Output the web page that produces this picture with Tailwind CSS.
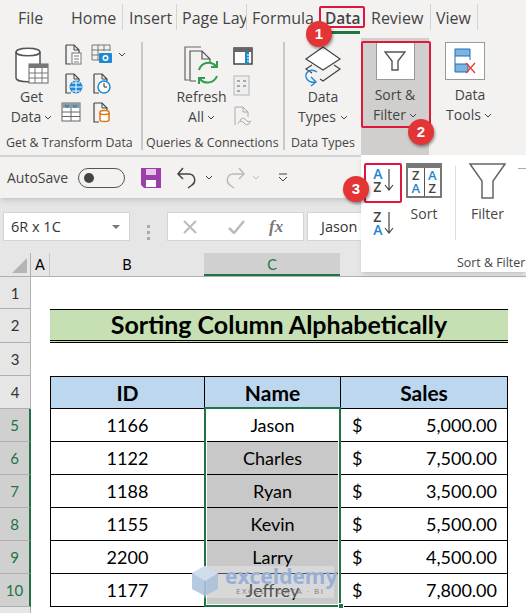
<!DOCTYPE html>
<html lang="en">
<head>
    <meta charset="UTF-8">
    <title>Sorting Column Alphabetically</title>
    <script src="https://cdn.jsdelivr.net/npm/@tailwindcss/browser@4"></script>
</head>
<body class="bg-white">
<div class="relative w-[526px] h-[613px] overflow-hidden font-['Open_Sans',sans-serif] text-[#444]">

    <!-- Tabs -->
    <div class="flex h-[30px] bg-[#f3f2f1] text-[16px] text-[#444]">
        <div class="w-[71px] pl-[18px] leading-[36px]">File</div>
        <div class="w-[52px] h-[26px] mt-[4px] leading-[28px] border-r border-[#d4d4d4]">Home</div>
        <div class="w-[54px] h-[26px] mt-[4px] leading-[28px] pl-[6px] border-r border-[#d4d4d4]">Insert</div>
        <div class="w-[70px] h-[26px] mt-[4px] leading-[28px] pl-[5px] border-r border-[#d4d4d4] overflow-hidden whitespace-nowrap">Page Lay</div>
        <div class="w-[72px] h-[26px] mt-[4px] leading-[28px] pl-[5px] overflow-hidden whitespace-nowrap">Formula</div>
        <div class="w-[52px] font-semibold pl-[6px] h-[26px] mt-[4px] leading-[28px] text-[15.500px]">Data</div>
        <div class="w-[60px] h-[26px] mt-[4px] leading-[28px] border-r border-[#d4d4d4]">Review</div>
        <div class="w-[47px] h-[26px] mt-[4px] leading-[28px] pl-[5px] border-r border-[#d4d4d4]">View</div>
    </div>

    <!-- Ribbon -->
    <div class="flex h-[127px] bg-[#f3f2f1] border-b-2 border-[#d4d4d4] text-[14px] leading-[20px]">
        <!-- Get & Transform Data -->
        <div class="w-[143px] h-[108px] mt-[12px] border-r-2 border-[#c8c8c8] flex flex-col">
            <div class="flex h-[93px]">
                <div class="w-[63px] pt-[4px] flex flex-col items-center">
                    <svg class="w-[36px] h-[41px]" viewBox="0 0 36 41" fill="none">
                        <path d="M2 6c0-5 24-5 24 0v26c0 5-24 5-24 0z" stroke="#555" stroke-width="1.5" fill="#fff"/>
                        <path d="M2 6c0 5 24 5 24 0" stroke="#555" stroke-width="1.5"/>
                        <rect x="15" y="18" width="19" height="19" fill="#fff" stroke="#666"/>
                        <path d="M15 18h19v4H15z" fill="#777"/>
                        <path d="M15 27h19M15 32h19M21 22v15M28 22v15" stroke="#777"/>
                    </svg>
                    <div>Get</div>
                    <div class="flex items-center gap-[3px]">Data <svg class="w-[8px] h-[5px]" viewBox="0 0 8 5" fill="none"><path d="M1 1l3 3 3-3" stroke="#444"/></svg></div>
                </div>
                <div class="grid grid-cols-[28px_36px] grid-rows-[29px_29px_29px] pt-[2px]">
                    <svg class="w-[20px] h-[21px]" viewBox="0 0 20 21" fill="none"><path d="M3 1h8l5 5v3M3 1v19h5" stroke="#444" stroke-width="1.2"/><path d="M11 1v5h5" stroke="#444"/><rect x="9" y="9" width="9" height="11" fill="#fff" stroke="#777"/><path d="M11 12h5M11 15h5M11 18h5" stroke="#777"/></svg>
                    <div class="flex items-center gap-[5px] h-[20px]">
                        <svg class="w-[22px] h-[20px]" viewBox="0 0 22 20" fill="none"><path d="M1 1h18v6M1 1v15h8M1 6h18M1 11h8M7 1v15M13 1v6" stroke="#777"/><rect x="8" y="9" width="13" height="10" rx="1" fill="#1e88d2"/><circle cx="14.500" cy="14" r="3" fill="#fff"/><circle cx="14.500" cy="14" r="1.500" fill="#1e88d2"/></svg>
                        <svg class="w-[8px] h-[5px]" viewBox="0 0 8 5" fill="none"><path d="M1 1l3 3 3-3" stroke="#444"/></svg>
                    </div>
                    <svg class="w-[20px] h-[21px]" viewBox="0 0 20 21" fill="none"><path d="M3 1h8l5 5v2M3 1v19h5" stroke="#444" stroke-width="1.2"/><path d="M11 1v5h5" stroke="#444"/><circle cx="13" cy="14" r="6.500" fill="#1e88d2"/><path d="M7 14h12M13 8v12M9 10h8M9 18h8" stroke="#fff"/></svg>
                    <svg class="w-[20px] h-[21px]" viewBox="0 0 20 21" fill="none"><path d="M3 1h8l5 5v2M3 1v19h5" stroke="#444" stroke-width="1.2"/><path d="M11 1v5h5" stroke="#444"/><circle cx="13" cy="14" r="6" fill="#fff" stroke="#1e88d2" stroke-width="1.500"/><path d="M13 10v4h3" stroke="#333"/></svg>
                    <svg class="w-[20px] h-[21px] -ml-[2px]" viewBox="0 0 20 21" fill="none"><rect x="1" y="1" width="18" height="18" fill="#fff" stroke="#666"/><path d="M1 1h18v5H1z" fill="#999"/><path d="M4 3l2 2 2-2M12 3l2 2 2-2" stroke="#1e88d2" stroke-width="1.500"/><path d="M1 10h18M1 14.500h18M10 6v13" stroke="#666"/></svg>
                    <svg class="w-[20px] h-[21px]" viewBox="0 0 20 21" fill="none"><path d="M3 1h8l5 5v2M3 1v19h5" stroke="#444" stroke-width="1.2"/><path d="M11 1v5h5" stroke="#444"/><path d="M9 10c0-2 9-2 9 0v8c0 2-9 2-9 0z" fill="#fff" stroke="#e3740f" stroke-width="1.500"/><path d="M9 11c0 2 9 2 9 0" stroke="#e3740f" stroke-width="1.500"/></svg>
                </div>
            </div>
            <div class="text-[12.400px] leading-[15px] pl-[6px] whitespace-nowrap">Get &amp; Transform Data</div>
        </div>

        <!-- Queries & Connections -->
        <div class="w-[142px] h-[108px] mt-[12px] border-r-2 border-[#c8c8c8] flex flex-col">
            <div class="flex h-[93px]">
                <div class="w-[87px] pl-[30px] pt-[4px] flex flex-col items-center">
                    <svg class="w-[36px] h-[41px] shrink-0" viewBox="0 0 36 41" fill="none">
                        <path d="M5 34H1V1h16" stroke="#666" stroke-width="1.2"/>
                        <path d="M6 35V5h12l8 8v4M6 35h6M18 5v8h8" stroke="#555" stroke-width="1.2"/>
                        <path d="M15 24a10 10 0 0 1 17-4M33 30a10 10 0 0 1-17 3" stroke="#2f9e4f" stroke-width="2"/>
                        <path d="M33 15v6h-6M15 38v-6h6" stroke="#2f9e4f" stroke-width="2"/>
                    </svg>
                    <div class="w-[60px] text-center">Refresh</div>
                    <div class="flex items-center gap-[3px]">All <svg class="w-[8px] h-[5px]" viewBox="0 0 8 5" fill="none"><path d="M1 1l3 3 3-3" stroke="#444"/></svg></div>
                </div>
                <div class="flex flex-col gap-[9px] pl-[3px] pt-[5px]">
                    <svg class="w-[20px] h-[19px]" viewBox="0 0 20 19" fill="none"><rect x="1" y="1" width="18" height="16" fill="#fff" stroke="#444" stroke-width="1.500"/><path d="M1 1h18v4H1z" fill="#666"/><path d="M14 5v12" stroke="#1e88d2" stroke-width="4"/><path d="M14 8h2M14 11h2M14 14h2" stroke="#fff"/></svg>
                    <svg class="w-[17px] h-[21px]" viewBox="0 0 17 21" fill="none"><rect x="1" y="1" width="15" height="19" fill="#eee" stroke="#b5b5b5"/><path d="M4 6h3M10 6h3M4 11h3M10 11h3M4 16h3" stroke="#aaa" stroke-width="2"/></svg>
                    <svg class="w-[19px] h-[21px] mt-[1px]" viewBox="0 0 19 21" fill="none"><path d="M2 19V1h8l5 5v5M10 1v5h5" stroke="#aaa"/><path d="M7 15a3 3 0 0 1 5-2l2 2a3 3 0 0 0 4 0M5 18a3 3 0 0 1 5-2l2 2a3 3 0 0 0 5-2" stroke="#aaa"/></svg>
                </div>
            </div>
            <div class="text-[12.400px] leading-[15px] pl-[3px] whitespace-nowrap overflow-hidden">Queries &amp; Connections</div>
        </div>

        <!-- Data Types -->
        <div class="w-[76px] h-[108px] mt-[12px] flex flex-col">
            <div class="h-[93px] pt-[4px] flex flex-col items-center">
                <svg class="w-[38px] h-[41px] shrink-0" viewBox="0 0 38 41" fill="none">
                    <path d="M19 1l17 12-17 11L2 13z" fill="#fff" stroke="#444" stroke-width="1.200"/>
                    <path d="M8 19l-6 4 6 4M30 19l6 4-17 12-3-2" stroke="#444" stroke-width="1.200"/>
                    <path d="M13 26c-6-4-12 0-11 5 1 4 5 6 9 5" stroke="#1e88d2" stroke-width="1.400"/>
                    <path d="M7 31l5 5-5 4" stroke="#1e88d2" stroke-width="1.400"/>
                </svg>
                <div>Data</div>
                <div class="flex items-center gap-[4px]">Types <svg class="w-[8px] h-[5px]" viewBox="0 0 8 5" fill="none"><path d="M1 1l3 3 3-3" stroke="#444"/></svg></div>
            </div>
            <div class="text-[12.400px] leading-[15px] text-center whitespace-nowrap">Data Types</div>
        </div>

        <!-- Sort & Filter (pressed) -->
        <div class="w-[68px] h-[117px] mt-[8px] bg-[#d0cfcd] flex flex-col items-center pt-[4px]">
            <div class="w-[39px] h-[38px] bg-white border border-[#999] flex items-center justify-center shrink-0">
                <svg class="w-[22px] h-[22px]" viewBox="0 0 22 22" fill="none"><path d="M1 2h20l-7 9v9H8v-9z" stroke="#555" stroke-width="1.400" fill="#fff"/></svg>
            </div>
            <div class="mt-[5px]">Sort &amp;</div>
            <div class="flex items-center gap-[3px]">Filter <svg class="w-[8px] h-[5px]" viewBox="0 0 8 5" fill="none"><path d="M1 1l3 3 3-3" stroke="#444"/></svg></div>
        </div>

        <!-- Data Tools -->
        <div class="flex-1 mt-[12px] flex flex-col">
            <div class="w-[40px] h-[38px] ml-[16px] bg-white border border-[#999] flex items-center justify-center">
                <svg class="w-[22px] h-[26px]" viewBox="0 0 22 26" fill="none"><path d="M1 1h15v7H1z" fill="#7fb4e0" stroke="#1e6fb5"/><path d="M1 8v8M16 8v4" stroke="#1e6fb5"/><path d="M1 16h13v8H1z" fill="#7fb4e0" stroke="#1e6fb5"/><path d="M12 15l9 10M21 15l-9 10" stroke="#e8413c" stroke-width="1.400"/></svg>
            </div>
            <div class="w-[72px] ml-[1px] mt-[5px] text-center pl-[8px]">Data</div>
            <div class="flex items-center justify-center gap-[3px] w-[80px]">Tools <svg class="w-[8px] h-[5px]" viewBox="0 0 8 5" fill="none"><path d="M1 1l3 3 3-3" stroke="#444"/></svg></div>
        </div>
    </div>

    <!-- Quick access toolbar -->
    <div class="relative z-10 flex items-center h-[41px] bg-[#f3f2f1] shadow-md text-[14px]">
        <div class="ml-[7px] w-[71px]">AutoSave</div>
        <div class="w-[47px] h-[20px] rounded-full border border-[#555] flex items-center pl-[5px]">
            <div class="w-[10px] h-[10px] rounded-full bg-[#444]"></div>
        </div>
        <svg class="ml-[16px] w-[20px] h-[20px]" viewBox="0 0 20 20"><path d="M0 0h20v20H3l-3-3z" fill="#9c3fa8"/><path d="M5 1h10v6H5z" fill="#e6c6ea"/><path d="M5 12h10v7H5z" fill="#fff"/></svg>
        <svg class="ml-[15px] w-[22px] h-[22px]" viewBox="0 0 22 22" fill="none"><path d="M2 7h11a6 6 0 0 1 3 11l-4 3M7 1L2 7l5 5" stroke="#444" stroke-width="1.500"/></svg>
        <svg class="ml-[7px] w-[8px] h-[5px]" viewBox="0 0 8 5" fill="none"><path d="M1 1l3 3 3-3" stroke="#444"/></svg>
        <svg class="ml-[11px] w-[22px] h-[22px]" viewBox="0 0 22 22" fill="none"><path d="M20 7H9a6 6 0 0 0-3 11l4 3M15 1l5 6-5 5" stroke="#bbb" stroke-width="1.500"/></svg>
        <svg class="ml-[6px] w-[8px] h-[5px]" viewBox="0 0 8 5" fill="none"><path d="M1 1l3 3 3-3" stroke="#bbb"/></svg>
        <svg class="ml-[18px] w-[10px] h-[9px]" viewBox="0 0 10 9" fill="none"><path d="M1 1h8M1 4l4 4 4-4" stroke="#444"/></svg>
    </div>

    <!-- Formula bar -->
    <div class="flex h-[55px] bg-[#e6e6e6] pt-[14px]">
        <div class="ml-[3px] w-[127px] h-[29px] bg-white border border-[#d4d4d4] flex items-center justify-between pl-[7px] pr-[9px] text-[14.500px] text-[#333]">
            6R x 1C
            <div class="w-0 h-0 border-x-[4px] border-x-transparent border-t-[4px] border-t-[#777]"></div>
        </div>
        <div class="w-[37px] flex flex-col items-center justify-center gap-[3px]">
            <div class="w-[3px] h-[3px] bg-[#aaa]"></div><div class="w-[3px] h-[3px] bg-[#aaa]"></div><div class="w-[3px] h-[3px] bg-[#aaa]"></div>
        </div>
        <div class="w-[137px] h-[29px] bg-white border border-[#d4d4d4] flex items-center pl-[15px]">
            <svg class="w-[14px] h-[14px]" viewBox="0 0 14 14" fill="none"><path d="M1 1l12 12M13 1L1 13" stroke="#bbb" stroke-width="2"/></svg>
            <svg class="ml-[31px] w-[17px] h-[14px]" viewBox="0 0 17 14" fill="none"><path d="M1 8l5 5L16 1" stroke="#bbb" stroke-width="2.500"/></svg>
            <span class="ml-[24px] font-['Liberation_Serif',serif] italic font-bold text-[17px] text-[#777]">fx</span>
        </div>
        <div class="ml-[3px] w-[60px] h-[29px] bg-white border border-[#d4d4d4] pl-[13px] text-[14.500px] leading-[27px] text-[#333] overflow-hidden">Jason</div>
    </div>

    <!-- Column headers -->
    <div class="flex h-[24px] bg-[#e6e6e6] font-['Lato',sans-serif] text-[14.500px] leading-[24px] text-black border-b border-[#b0b0b0]">
        <div class="relative w-[31px] border-r border-[#b0b0b0]">
            <div class="absolute right-[3px] bottom-[3px] w-0 h-0 border-l-[15px] border-l-transparent border-b-[15px] border-b-[#b5b5b5]"></div>
        </div>
        <div class="w-[19px] text-center border-r border-[#c8c8c8]">A</div>
        <div class="w-[154px] text-center">B</div>
        <div class="w-[136px] text-center bg-[#d0d0d0] text-[#217346] border-b-2 border-[#217346]">C</div>
        <div class="flex-1"></div>
    </div>

    <!-- Sheet -->
    <div class="font-['Lato',sans-serif] text-[18px] text-black leading-[32px]">
        <div class="flex h-[32px]"><div class="w-[31px] bg-[#e6e6e6] border-r border-b border-[#b0b0b0] text-center text-[15px] text-[#333]">1</div></div>
        <div class="flex h-[34px]">
            <div class="w-[31px] bg-[#e6e6e6] border-r border-b border-[#b0b0b0] text-center text-[15px] text-[#333]">2</div>
            <div class="ml-[19px] w-[458px] bg-[#c6e0b4] border-t border-b-[3px] border-b-black border-double border-black text-center font-bold text-[25px] leading-[29px]">Sorting Column Alphabetically</div>
        </div>
        <div class="flex h-[33px]"><div class="w-[31px] bg-[#e6e6e6] border-r border-b border-[#b0b0b0] text-center text-[15px] text-[#333]">3</div></div>
        <div class="flex h-[33px]">
            <div class="w-[31px] bg-[#e6e6e6] border-r border-b border-[#b0b0b0] text-center text-[15px] text-[#333]">4</div>
            <div class="ml-[19px] flex h-[33px] bg-[#bdd7ee] border-t border-b border-black font-bold text-[21px] leading-[31px]">
                <div class="w-[154px] border-l border-black text-center">ID</div>
                <div class="w-[136px] border-l border-black text-center">Name</div>
                <div class="w-[168px] border-x border-black text-center">Sales</div>
            </div>
        </div>

        <div class="flex h-[33px]">
            <div class="w-[31px] bg-[#d0d0d0] border-r-2 border-r-[#217346] border-b border-[#b0b0b0] text-center text-[15px] text-[#217346]">5</div>
            <div class="ml-[19px] flex h-[33px] border-b border-black">
                <div class="w-[154px] border-l border-black text-center">1166</div>
                <div class="w-[136px] border-l border-black text-center">Jason</div>
                <div class="w-[168px] border-x border-black flex justify-between pl-[11px] pr-[10px]"><span>$</span><span>5,000.00</span></div>
            </div>
        </div>
        <div class="flex h-[33px]">
            <div class="w-[31px] bg-[#d0d0d0] border-r-2 border-r-[#217346] border-b border-[#b0b0b0] text-center text-[15px] text-[#217346]">6</div>
            <div class="ml-[19px] flex h-[33px] border-b border-black">
                <div class="w-[154px] border-l border-black text-center">1122</div>
                <div class="w-[136px] border-l border-black text-center bg-[#c8c8c8]">Charles</div>
                <div class="w-[168px] border-x border-black flex justify-between pl-[11px] pr-[10px]"><span>$</span><span>7,500.00</span></div>
            </div>
        </div>
        <div class="flex h-[33px]">
            <div class="w-[31px] bg-[#d0d0d0] border-r-2 border-r-[#217346] border-b border-[#b0b0b0] text-center text-[15px] text-[#217346]">7</div>
            <div class="ml-[19px] flex h-[33px] border-b border-black">
                <div class="w-[154px] border-l border-black text-center">1188</div>
                <div class="w-[136px] border-l border-black text-center bg-[#c8c8c8]">Ryan</div>
                <div class="w-[168px] border-x border-black flex justify-between pl-[11px] pr-[10px]"><span>$</span><span>3,500.00</span></div>
            </div>
        </div>
        <div class="flex h-[33px]">
            <div class="w-[31px] bg-[#d0d0d0] border-r-2 border-r-[#217346] border-b border-[#b0b0b0] text-center text-[15px] text-[#217346]">8</div>
            <div class="ml-[19px] flex h-[33px] border-b border-black">
                <div class="w-[154px] border-l border-black text-center">1155</div>
                <div class="w-[136px] border-l border-black text-center bg-[#c8c8c8]">Kevin</div>
                <div class="w-[168px] border-x border-black flex justify-between pl-[11px] pr-[10px]"><span>$</span><span>5,500.00</span></div>
            </div>
        </div>
        <div class="flex h-[33px]">
            <div class="w-[31px] bg-[#d0d0d0] border-r-2 border-r-[#217346] border-b border-[#b0b0b0] text-center text-[15px] text-[#217346]">9</div>
            <div class="ml-[19px] flex h-[33px] border-b border-black">
                <div class="w-[154px] border-l border-black text-center">2200</div>
                <div class="w-[136px] border-l border-black text-center bg-[#c8c8c8]">Larry</div>
                <div class="w-[168px] border-x border-black flex justify-between pl-[11px] pr-[10px]"><span>$</span><span>4,500.00</span></div>
            </div>
        </div>
        <div class="flex h-[33px]">
            <div class="w-[31px] bg-[#d0d0d0] border-r-2 border-r-[#217346] border-b border-[#b0b0b0] text-center text-[15px] text-[#217346]">10</div>
            <div class="ml-[19px] flex h-[33px] border-b border-black">
                <div class="w-[154px] border-l border-black text-center">1177</div>
                <div class="w-[136px] border-l border-black text-center bg-[#c8c8c8]">Jeffrey</div>
                <div class="w-[168px] border-x border-black flex justify-between pl-[11px] pr-[10px]"><span>$</span><span>7,800.00</span></div>
            </div>
        </div>
        <div class="flex h-[8px]"><div class="w-[31px] bg-[#e6e6e6] border-r border-[#b0b0b0]"></div></div>
    </div>

    <!-- Selection box -->
    <div class="absolute left-[204px] top-[407px] w-[137px] h-[200px] border-2 border-[#217346] shadow-[inset_0_0_0_1px_#fff]"></div>
    <div class="absolute left-[338px] top-[603px] w-[6px] h-[6px] bg-[#217346] border border-white"></div>

    <!-- Watermark -->
    <div class="absolute left-[192px] top-[566px] w-[142px] h-[32px] bg-white/30">
        <svg class="absolute -left-[1px] -top-[1px] w-[28px] h-[32px]" viewBox="0 0 28 32"><path d="M14 1l13 7v16l-13 7-13-7V8z" fill="#a9bfdc" opacity="0.85"/><path d="M14 1l13 7-13 8-13-8z" fill="#d5e0f0" opacity="0.9"/></svg>
        <span class="absolute left-[33px] -top-[3px] font-bold text-[21px] leading-[26px] text-[#98b0d8]">exceldemy</span>
        <span class="absolute left-[44px] top-[20px] text-[8px] leading-[10px] tracking-[1.500px] text-[#808080]">EXCEL · DATA · BI</span>
    </div>

    <!-- Sort & Filter popup -->
    <div class="absolute z-20 left-[361px] top-[155px] w-[165px] h-[117px] bg-white shadow-md text-[14px] text-[#444]">
        <div class="flex h-[85px] pl-[3px] pt-[8px]">
            <div class="w-[37px] flex flex-col">
                <div class="h-[39px] flex items-center justify-center pl-[2px]">
                    <span class="flex flex-col text-[14px] leading-[13px] font-semibold"><span class="text-[#1e88d2]">A</span><span>Z</span></span>
                    <svg class="w-[10px] h-[24px] ml-[1px]" viewBox="0 0 10 24" fill="none"><path d="M5 1v21M1 17l4 5 4-5" stroke="#444" stroke-width="1.200"/></svg>
                </div>
                <div class="h-[39px] mt-[8px] flex items-center justify-center pl-[2px]">
                    <span class="flex flex-col text-[14px] leading-[13px] font-semibold"><span>Z</span><span class="text-[#1e88d2]">A</span></span>
                    <svg class="w-[10px] h-[24px] ml-[1px]" viewBox="0 0 10 24" fill="none"><path d="M5 1v21M1 17l4 5 4-5" stroke="#444" stroke-width="1.200"/></svg>
                </div>
            </div>
            <div class="relative ml-[5px] w-[36px] flex flex-col items-center">
                <div class="w-[36px] h-[35px] border-2 border-[#777] border-t-[5px] flex text-[13px] leading-[13px] font-semibold text-center">
                    <span class="flex-1 border-r border-[#555] flex flex-col justify-center"><span>Z</span><span class="text-[#1e88d2]">A</span></span>
                    <span class="flex-1 flex flex-col justify-center"><span class="text-[#1e88d2]">A</span><span>Z</span></span>
                </div>
                <div class="mt-[5px]">Sort</div>
            </div>
            <div class="ml-[13px] h-[74px] mt-[3px] border-l border-[#ddd]"></div>
            <div class="ml-[13px] w-[37px] flex flex-col items-center">
                <svg class="w-[37px] h-[36px] shrink-0" viewBox="0 0 37 36" fill="none"><path d="M1 1h35L24 18v17H13V18z" fill="#fff" stroke="#666" stroke-width="1.500"/></svg>
                <div class="mt-[4px]">Filter</div>
            </div>
            <div class="ml-[12px] w-[8px] h-[1px] mt-[5px] bg-[#aaa]"></div>
        </div>
        <div class="absolute left-[96px] top-[100px] text-[12.400px] leading-[16px] whitespace-nowrap">Sort &amp; Filter</div>
    </div>

    <!-- Red annotation boxes -->
    <div class="absolute z-30 left-[319px] top-[6px] w-[46px] h-[22px] border-2 border-[#e0173d] rounded-[2px]"></div>
    <div class="absolute z-30 left-[325px] top-[31px] w-[35px] h-[3px] bg-[#217346]"></div>
    <div class="absolute z-30 left-[361px] top-[41px] w-[70px] h-[87px] border-2 border-[#e0173d] rounded-[2px]"></div>
    <div class="absolute z-30 left-[364px] top-[163px] w-[38px] h-[40px] border-2 border-[#e0173d] rounded-[2px]"></div>

    <!-- Step badges -->
    <div class="absolute z-30 left-[306px] top-[21px] w-[26px] h-[26px] rounded-full bg-[#e33535] shadow-[1px_2px_3px_rgba(0,0,0,0.4)] text-white font-['Liberation_Sans',sans-serif] font-bold text-[15px] leading-[26px] text-center">1</div>
    <div class="absolute z-30 left-[408px] top-[119px] w-[26px] h-[26px] rounded-full bg-[#e33535] shadow-[1px_2px_3px_rgba(0,0,0,0.4)] text-white font-['Liberation_Sans',sans-serif] font-bold text-[15px] leading-[26px] text-center">2</div>
    <div class="absolute z-30 left-[343px] top-[176px] w-[26px] h-[26px] rounded-full bg-[#e33535] shadow-[1px_2px_3px_rgba(0,0,0,0.4)] text-white font-['Liberation_Sans',sans-serif] font-bold text-[15px] leading-[26px] text-center">3</div>
</div>
</body>
</html>
